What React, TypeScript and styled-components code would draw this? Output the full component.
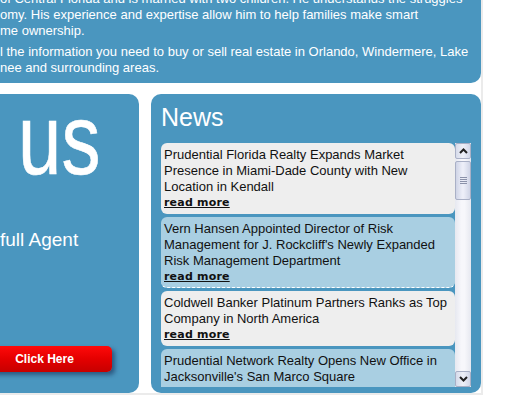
import React from "react";
import styled, { createGlobalStyle } from "styled-components";

const GlobalStyle = createGlobalStyle`
  html, body { margin: 0; padding: 0; background: #fff; overflow: hidden; }
  body { font-family: "Liberation Sans", Arial, sans-serif; }
`;

const BLUE = "#4a96bf";

const Page = styled.div`
  width: 511px;
  margin: -9px 0 0 -30px;
  border-right: 2px solid #ebebeb;
  border-bottom: 2px solid #ebebeb;
  display: flex;
  flex-direction: column;
  gap: 11px;
`;

const TopPanel = styled.div`
  background: ${BLUE};
  border-radius: 0 0 10px 10px;
  padding: 0 12px 7px 30px;
  color: #fff;
  font-size: 13px;
  line-height: 16px;
  white-space: nowrap;
`;

const Para = styled.p`
  margin: 0;
  & + & { margin-top: 5px; }
`;

const Row = styled.div`
  display: flex;
  gap: 12px;
  height: 299px;
`;

const LeftPanel = styled.div`
  width: 169px;
  background: ${BLUE};
  border-radius: 0 10px 10px 0;
  display: flex;
  flex-direction: column;
  color: #fff;
`;

const BigTitle = styled.div`
  font-family: "Liberation Sans", Arial, sans-serif;
  font-size: 100px;
  line-height: 80px;
  margin: 5px 0 0 48px;
  transform: scaleX(0.78);
  transform-origin: left center;
  -webkit-text-stroke: 0.6px #fff;
`;

const Tagline = styled.div`
  font-size: 19px;
  line-height: 22px;
  margin: 50px 0 0 30px;
  white-space: nowrap;
`;

const ClickButton = styled.a`
  display: block;
  width: 135px;
  height: 26px;
  margin: 95px 0 0 7px;
  border-radius: 5px;
  background: linear-gradient(to bottom, #ff0a0a 0%, #e40000 50%, #c60000 100%);
  box-shadow: 3px 3px 4px rgba(20, 40, 80, 0.55);
  color: #fff;
  font-weight: bold;
  font-size: 12px;
  line-height: 26px;
  text-align: center;
  text-decoration: none;
`;

const NewsPanel = styled.div`
  flex: 1;
  background: ${BLUE};
  border-radius: 10px;
  padding: 8px 10px 6px;
  display: flex;
  flex-direction: column;
`;

const NewsTitle = styled.h2`
  margin: 0 0 11px;
  font-weight: normal;
  font-size: 25px;
  line-height: 30px;
  color: #fff;
`;

const ListArea = styled.div`
  display: flex;
  height: 244px;
`;

const Items = styled.div`
  width: 294px;
  overflow: hidden;
  display: flex;
  flex-direction: column;
  gap: 3px;
`;

const Item = styled.div<{ $alt?: boolean; $dashed?: boolean }>`
  flex-shrink: 0;
  position: relative;
  background: ${(p) => (p.$alt ? "#a9cfe2" : "#eeeeee")};
  border-radius: 6px;
  padding: 4px 1px ${(p) => (p.$dashed ? "2px" : "3px")} 3px;
  border-bottom: ${(p) => (p.$dashed ? "1px dashed #fff" : "none")};
  font-size: 13px;
  line-height: 16px;
  color: #111;
`;

const ReadMore = styled.a`
  display: block;
  width: max-content;
  font-family: Verdana, "DejaVu Sans", sans-serif;
  font-weight: bold;
  font-size: 11px;
  letter-spacing: 0.2px;
  line-height: 16px;
  height: 16px;
  color: #111;
  text-decoration: underline;
`;

const ScrollBar = styled.div`
  width: 16px;
  display: flex;
  flex-direction: column;
  background: linear-gradient(to right, #e6e8f0, #f7f7fb 40%, #f7f7fb 60%, #e6e8f0);
`;

const ScrollBtn = styled.div`
  height: 16px;
  box-sizing: border-box;
  border: 1px solid #a9b0c6;
  border-radius: 2px;
  background: linear-gradient(to right, #d6dbea, #eef0f8 50%, #d2d7e8);
  display: flex;
  align-items: center;
  justify-content: center;
`;

const Thumb = styled.div`
  margin-top: 2px;
  height: 39px;
  box-sizing: border-box;
  border: 1px solid #a9b0c6;
  border-radius: 2px;
  background: linear-gradient(to right, #cfd4e6, #eceef8 45%, #eceef8 55%, #cfd4e6);
  display: flex;
  flex-direction: column;
  align-items: center;
  justify-content: center;
  gap: 1px;
`;

const Grip = styled.span`
  width: 7px;
  height: 1px;
  background: #8b92aa;
`;

const Spacer = styled.div`
  flex: 1;
`;

const Chevron = ({ up }: { up?: boolean }) => (
  <svg width="9" height="6" viewBox="0 0 9 6">
    <polyline
      points={up ? "1,5 4.5,1.5 8,5" : "1,1 4.5,4.5 8,1"}
      fill="none"
      stroke="#222"
      strokeWidth="2"
    />
  </svg>
);

const news = [
  { title: "Prudential Florida Realty Expands Market Presence in Miami-Dade County with New Location in Kendall", alt: false, dashed: false },
  { title: "Vern Hansen Appointed Director of Risk Management for J. Rockcliff's Newly Expanded Risk Management Department", alt: true, dashed: true },
  { title: "Coldwell Banker Platinum Partners Ranks as Top Company in North America", alt: false, dashed: false },
  { title: "Prudential Network Realty Opens New Office in Jacksonville's San Marco Square", alt: true, dashed: false },
];

export default function App() {
  return (
    <>
      <GlobalStyle />
      <Page>
        <TopPanel>
          <Para>
            of Central Florida and is married with two children. He understands the struggles
            <br />
            omy. His experience and expertise allow him to help families make smart
            <br />
            me ownership.
          </Para>
          <Para>
            l the information you need to buy or sell real estate in Orlando, Windermere, Lake
            <br />
            nee and surrounding areas.
          </Para>
        </TopPanel>
        <Row>
          <LeftPanel>
            <BigTitle>us</BigTitle>
            <Tagline>full Agent</Tagline>
            <ClickButton href="#">Click Here</ClickButton>
          </LeftPanel>
          <NewsPanel>
            <NewsTitle>News</NewsTitle>
            <ListArea>
              <Items>
                {news.map((n) => (
                  <Item key={n.title} $alt={n.alt} $dashed={n.dashed}>
                    {n.title}
                    <ReadMore href="#">read more</ReadMore>
                  </Item>
                ))}
              </Items>
              <ScrollBar>
                <ScrollBtn>
                  <Chevron up />
                </ScrollBtn>
                <Thumb>
                  <Grip />
                  <Grip />
                  <Grip />
                  <Grip />
                </Thumb>
                <Spacer />
                <ScrollBtn>
                  <Chevron />
                </ScrollBtn>
              </ScrollBar>
            </ListArea>
          </NewsPanel>
        </Row>
      </Page>
    </>
  );
}
